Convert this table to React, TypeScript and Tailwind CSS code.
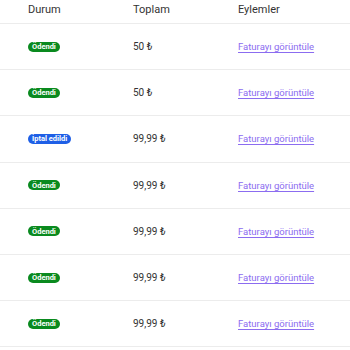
import React from "react";

const rows = [
  { status: "Ödendi", paid: true, total: "50 ₺" },
  { status: "Ödendi", paid: true, total: "50 ₺" },
  { status: "İptal edildi", paid: false, total: "99,99 ₺" },
  { status: "Ödendi", paid: true, total: "99,99 ₺" },
  { status: "Ödendi", paid: true, total: "99,99 ₺" },
  { status: "Ödendi", paid: true, total: "99,99 ₺" },
  { status: "Ödendi", paid: true, total: "99,99 ₺" },
];

export default function App() {
  return (
    <div
      className="w-[350px] h-[350px] bg-white overflow-hidden text-[#333333]"
      style={{ fontFamily: 'Roboto, "Open Sans", sans-serif' }}
    >
      <div className="grid grid-cols-[105px_105px_1fr] h-[24px] items-center pl-[28px] pb-[2px] border-b border-[#ececec] text-[11px]">
        <div>Durum</div>
        <div>Toplam</div>
        <div>Eylemler</div>
      </div>
      {rows.map((r, i) => (
        <div
          key={i}
          className="grid grid-cols-[105px_105px_1fr] h-[46.2px] items-center pl-[28px] border-b border-[#ececec] text-[10px] whitespace-nowrap"
        >
          <div className="flex">
            <span
              className={`inline-flex items-center h-[10px] px-[4px] rounded-full text-white font-bold text-[7.5px] leading-[10px] pt-[1px] ${
                r.paid ? "bg-[#0a8a1f]" : "bg-[#1e5fe6]"
              }`}
            >
              {r.status}
            </span>
          </div>
          <div>{r.total}</div>
          <div>
            <a href="#" className="text-[#8b6cf0] underline underline-offset-2 text-[9.5px]">
              Faturayı görüntüle
            </a>
          </div>
        </div>
      ))}
    </div>
  );
}
